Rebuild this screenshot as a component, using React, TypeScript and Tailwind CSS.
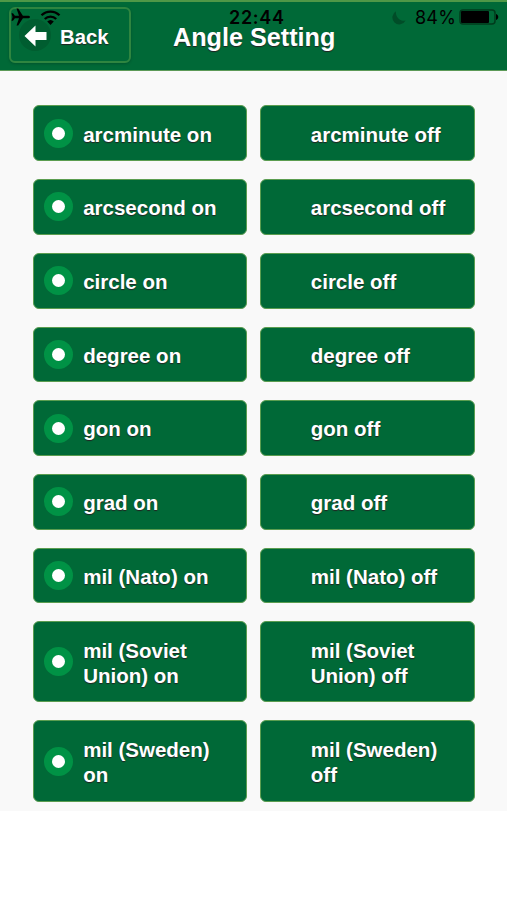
const units = [
  "arcminute",
  "arcsecond",
  "circle",
  "degree",
  "gon",
  "grad",
  "mil (Nato)",
  "mil (Soviet Union)",
  "mil (Sweden)",
];

function StatusBar() {
  return (
    <div className="absolute inset-x-0 top-[6px] h-[18px] font-[Inter,sans-serif] text-black">
      <svg className="absolute left-[11px] top-0 h-[18px] w-[19px]" viewBox="0 0 19 18" fill="currentColor">
        <path d="M19 9c0 .8-1 1.3-2.4 1.3h-4.7L7.2 17.6H5.5L8 10.3H3.9L2 12.7H.5L1.5 9 .5 5.3H2l1.9 2.4H8L5.5.4h1.7l4.7 7.3h4.7C18 7.7 19 8.2 19 9Z" />
      </svg>

      <svg className="absolute left-[40px] top-[2px] h-[15px] w-[21px]" viewBox="0 0 21 15" fill="none" stroke="currentColor" strokeWidth={2.3}>
        <path d="M1.5 5.3a12.8 12.8 0 0 1 18 0" />
        <path d="M4.8 9a8 8 0 0 1 11.4 0" />
        <path d="M10.5 15 7.2 11.6a4.8 4.8 0 0 1 6.6 0Z" fill="currentColor" stroke="none" />
      </svg>

      <span className="absolute left-[229px] top-[1px] text-[18px] font-semibold leading-[18px] tracking-[0.7px]">22:44</span>

      <svg className="absolute left-[391px] top-[3px] h-[14px] w-[15px] text-[#004d28]" viewBox="0 0 15 14" fill="currentColor">
        <path d="M5 .3A7 7 0 1 0 14.6 9.6 8.2 8.2 0 0 1 5 .3Z" />
      </svg>

      <span className="absolute left-[415px] top-[1px] text-[18px] leading-[18px] tracking-[0.2px]">84%</span>

      <svg className="absolute left-[459px] top-[1px] h-[16px] w-[40px]" viewBox="0 0 40 16">
        <rect x="1" y="1" width="35" height="14" rx="3" fill="none" stroke="#003b1d" strokeWidth="1.5" />
        <rect x="2" y="2" width="28" height="12" rx="1" fill="black" />
        <path d="M37 5c3 1 3 5 0 6Z" fill="black" />
      </svg>
    </div>
  );
}

function Header() {
  return (
    <header className="relative flex h-[71px] items-start border-b border-t-2 border-b-[#5c9a58] border-t-[#4f9847] bg-[#006937] pl-[9px] pt-[5px]">
      <button className="flex h-[56px] w-[122px] items-center rounded-[6px] border-2 border-[#2f8540] pl-[8px] text-[20.3px] font-bold text-white shadow-[0_1px_3px_rgba(0,0,0,0.2)] [text-shadow:0_1px_1px_#222]">
        <span className="flex size-[32px] items-center justify-center rounded-full bg-[#005d30]">
          <svg className="mt-[2px] h-[22px] w-[23px]" viewBox="0 0 23 22" fill="white">
            <path d="M0.5 11 11.5 0.5V7H22.5V15H11.5V21.5Z" />
          </svg>
        </span>
        <span className="ml-[9px] mt-[4px]">Back</span>
      </button>
      <h1 className="ml-[42px] mt-[15px] text-[25.2px] font-bold leading-[31px] text-white [text-shadow:0_1px_1px_#222]">
        Angle Setting
      </h1>
      <StatusBar />
    </header>
  );
}

function Option({ label, checked }: { label: string; checked?: boolean }) {
  return (
    <button className="flex items-center rounded-[6px] border border-[#5b9d50] bg-[#006937] py-[14.2px] pl-[10.3px] pr-[20px] text-left text-[20.5px] font-bold leading-[25.35px] text-white [text-shadow:0_1px_1px_#222]">
      <span
        className={
          checked
            ? "-my-1 flex size-[29px] shrink-0 items-center justify-center rounded-full bg-[#009245]"
            : "-my-1 size-[29px] shrink-0"
        }
      >
        {checked && <span className="size-[13px] rounded-full bg-white" />}
      </span>
      <span className="-mb-[1px] ml-[10.4px] mt-[1px]">{label}</span>
    </button>
  );
}

export default function App() {
  return (
    <div className="h-[900px] w-[507px] overflow-hidden bg-white font-['Liberation_Sans',Arial,sans-serif]">
      <div className="h-[811px] bg-[#f9f9f9]">
        <Header />
        <main className="flex flex-col gap-[18px] pl-[32.5px] pr-[32px] pt-[34.4px]">
          {units.map((unit) => (
            <div key={unit} className="grid grid-cols-2 gap-[12.7px]">
              <Option label={`${unit} on`} checked />
              <Option label={`${unit} off`} />
            </div>
          ))}
        </main>
      </div>
    </div>
  );
}
